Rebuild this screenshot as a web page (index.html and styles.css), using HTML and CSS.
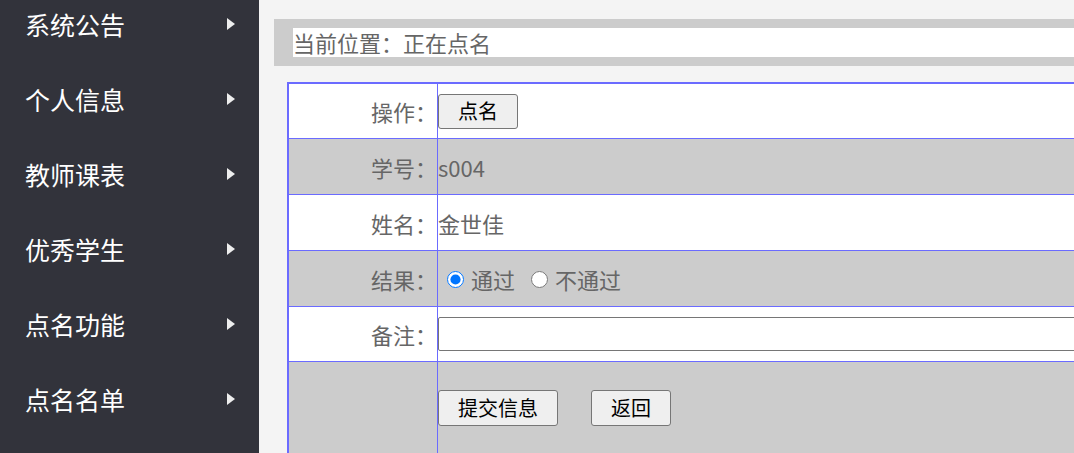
FILE: index.html
```html
<!DOCTYPE html>
<html lang="zh-CN">
<head>
  <meta charset="UTF-8" />
  <title>正在点名</title>
  <link rel="stylesheet" href="styles.css">
</head>
<body>
  <aside class="sidebar">
    <ul class="menu">
      <li><span>系统公告</span><i class="arrow"></i></li>
      <li><span>个人信息</span><i class="arrow"></i></li>
      <li><span>教师课表</span><i class="arrow"></i></li>
      <li><span>优秀学生</span><i class="arrow"></i></li>
      <li><span>点名功能</span><i class="arrow"></i></li>
      <li><span>点名名单</span><i class="arrow"></i></li>
    </ul>
  </aside>

  <main class="content">
    <div class="crumb">
      <div class="crumb-text">当前位置：正在点名</div>
    </div>

    <form class="form">
      <table class="info">
        <tr class="short">
          <td class="label">操作：</td>
          <td><button type="button" class="btn">点名</button></td>
        </tr>
        <tr class="alt">
          <td class="label">学号：</td>
          <td>s004</td>
        </tr>
        <tr>
          <td class="label">姓名：</td>
          <td>金世佳</td>
        </tr>
        <tr class="alt">
          <td class="label">结果：</td>
          <td>
            <label class="choice"><input type="radio" name="result" checked>通过</label>
            <label class="choice"><input type="radio" name="result">不通过</label>
          </td>
        </tr>
        <tr class="short">
          <td class="label">备注：</td>
          <td><input type="text" class="note"></td>
        </tr>
        <tr class="alt">
          <td class="label"></td>
          <td class="actions">
            <button type="button" class="btn btn-tall">提交信息</button>
            <button type="button" class="btn btn-tall back">返回</button>
          </td>
        </tr>
      </table>
    </form>
  </main>
</body>
</html>
```

FILE: styles.css
```css
body {
  margin: 0;
  display: flex;
  height: 453px;
  overflow: hidden;
  font-family: "Noto Sans CJK SC", "Liberation Sans", sans-serif;
  background: #f4f4f4;
}

.sidebar {
  width: 259px;
  flex: none;
  background: #32333b;
}

.menu {
  list-style: none;
  margin: 0;
  padding: 0;
}

.menu li {
  display: flex;
  align-items: center;
  justify-content: space-between;
  height: 48px;
  margin-bottom: 27px;
  padding: 0 24px 0 25px;
  color: #fff;
  font-size: 25px;
}

.arrow {
  width: 0;
  height: 0;
  border-left: 8px solid #eee;
  border-top: 6px solid transparent;
  border-bottom: 6px solid transparent;
}

.content {
  flex: 1;
  min-width: 0;
  overflow: hidden;
  padding: 19px 0 0 15px;
}

.crumb {
  background: #ccc;
  padding: 9px 0 9px 19px;
}

.crumb-text {
  background: #fff;
  height: 29px;
  line-height: 29px;
  font-size: 22px;
  color: #666;
}

.form {
  margin: 16px 0 0 13px;
}

.info {
  width: 1000px;
  border-collapse: separate;
  border-spacing: 0;
  border-top: 2px solid #6b6bff;
  border-left: 2px solid #6b6bff;
  background: #fff;
  font-size: 22px;
  color: #666;
}

.info tr {
  height: 56px;
}

.info tr.short {
  height: 55px;
}

.info td {
  border-right: 1px solid #6b6bff;
  border-bottom: 1px solid #6b6bff;
  padding: 0;
}

.info .alt {
  background: #ccc;
}

.info .label {
  width: 148px;
  text-align: right;
}

.btn {
  font-family: inherit;
  font-size: 20px;
  color: #000;
  background: #efefef;
  border: 1px solid #767676;
  border-radius: 3px;
  height: 35px;
  padding: 0 19px;
  line-height: 1;
}

.btn-tall {
  height: 36px;
}

.back {
  margin-left: 28px;
}

.choice {
  display: inline-flex;
  align-items: center;
  margin-right: 2px;
}

.choice input {
  width: 17px;
  height: 17px;
  margin: 0 7px 0 9px;
  accent-color: #0075ff;
}

.note {
  display: block;
  box-sizing: border-box;
  width: 100%;
  height: 34px;
  margin: 0;
  border: 1px solid #767676;
  border-radius: 2px;
}

.info .actions {
  vertical-align: top;
  padding: 28px 0 40px;
}
```
